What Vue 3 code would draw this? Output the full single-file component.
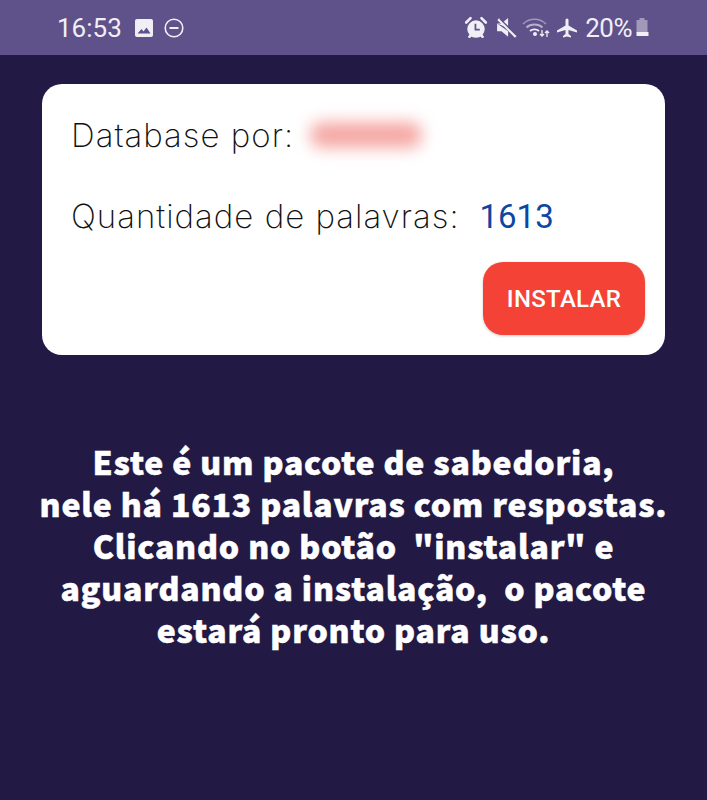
<template>
  <div class="screen">
    <!-- status bar -->
    <header class="status">
      <div class="status__left">
        <span class="status__time">16:53</span>
        <svg class="status__icon" width="18" height="18" viewBox="0 0 18 18">
          <path fill="#f1eff6" fill-rule="evenodd" d="M2 0h14a2 2 0 0 1 2 2v14a2 2 0 0 1-2 2H2a2 2 0 0 1-2-2V2a2 2 0 0 1 2-2zM2.500 14.500h13L11.500 8.500l-3 4-2-2.500z"/>
        </svg>
        <svg width="20" height="20" viewBox="0 0 20 20" fill="none">
          <circle cx="10" cy="10" r="8.800" stroke="#f1eff6" stroke-width="1.600"/>
          <path d="M5.500 10h9" stroke="#f1eff6" stroke-width="2"/>
        </svg>
      </div>
      <div class="status__right">
        <svg width="24" height="24" viewBox="0 0 22 22">
          <path fill="none" stroke="#f1eff6" stroke-width="2.400" stroke-linecap="round" d="M2 6l4-4M20 6l-4-4M5 19l2-2M17 19l-2-2"/>
          <circle cx="11" cy="12" r="8" fill="#f1eff6"/>
          <path fill="none" stroke="#5f5189" stroke-width="1.600" d="M10.500 7v5.500h4"/>
        </svg>
        <svg class="status__mute" width="22" height="22" viewBox="0 0 20 20">
          <path fill="#f1eff6" d="M1 6h4l6-5v9zM1 6v7h4l6 5v-5z"/>
          <path fill="none" stroke="#f1eff6" stroke-width="2.200" d="M2 2l16 16"/>
          <path fill="none" stroke="#5f5189" stroke-width="1.200" d="M3.500 1.500l15 15"/>
        </svg>
        <svg class="status__wifi" width="28" height="24" viewBox="0 0 28 22" fill="none">
          <path stroke="#f1eff6" stroke-opacity=".45" stroke-width="1.500" d="M1 7c6-6.500 17-6.500 23 0"/>
          <path stroke="#f1eff6" stroke-opacity=".6" stroke-width="1.800" d="M4.500 10.500c4-4 12-4 16 0"/>
          <path stroke="#f1eff6" stroke-width="1.800" d="M8 14c2.500-2.200 6.500-2.200 9 0"/>
          <circle cx="13" cy="17" r="2" fill="#f1eff6"/>
          <path stroke="#f1eff6" stroke-width="1.300" d="M20 13v6M18 17l2 2 2-2M25 20v-6M23 16l2-2 2 2"/>
        </svg>
        <svg class="status__plane" width="22" height="22" viewBox="0 0 22 22">
          <path fill="#f1eff6" d="M9.500 8.500V3a1.500 1.500 0 0 1 3 0v5.500l8.500 5v2l-8.500-2.500V17l2.500 2v1.500L11 19.500 7 20.500V19l2.500-2v-4L1 15.500v-2z"/>
        </svg>
        <span class="status__pct">20%</span>
        <svg class="status__batt" width="15" height="22" viewBox="0 0 14 22">
          <path fill="#f1eff6" fill-opacity=".45" d="M4 3V1h5v2h3v13H1V3z"/>
          <path fill="#f1eff6" d="M1 15h12v4H1z"/>
        </svg>
      </div>
    </header>

    <main class="content">
      <section class="card">
        <div class="card__row card__row--author">
          <span class="card__label">Database por:</span>
          <span class="card__blur"></span>
        </div>
        <div class="card__row card__row--count">
          <span class="card__label">Quantidade de palavras:</span>
          <span class="card__num">1613</span>
        </div>
        <div class="card__action">
          <button class="card__btn">INSTALAR</button>
        </div>
      </section>

      <p class="desc">
        Este é um pacote de sabedoria,<br>
        nele há 1613 palavras com respostas.<br>
        Clicando no botão&nbsp; "instalar" e<br>
        aguardando a instalação,&nbsp; o pacote<br>
        estará pronto para uso.
      </p>
    </main>
  </div>
</template>

<script setup>
</script>

<style>
html, body {
  margin: 0;
  background: #221a45;
}
</style>

<style scoped>
.screen {
  width: 707px;
  height: 800px;
  overflow: hidden;
  background: #221a45;
  display: flex;
  flex-direction: column;
}

/* status bar */
.status {
  height: 55px;
  flex: none;
  background: #5f5189;
  display: flex;
  align-items: center;
  justify-content: space-between;
  padding: 0 57px 0 57px;
  color: #f1eff6;
  font-family: Roboto, sans-serif;
}

.status__left {
  display: flex;
  align-items: center;
}

.status__time {
  font-size: 26px;
  margin-right: 13px;
}

.status__icon {
  margin-right: 11px;
}

.status__right {
  display: flex;
  align-items: center;
  gap: 7px;
}

.status__mute {
  margin-left: 1px;
}

.status__wifi {
  margin-left: -3px;
}

.status__plane {
  margin-left: -1px;
}

.status__pct {
  font-size: 26px;
  letter-spacing: -0.5px;
}

.status__batt {
  margin-left: -4px;
}

/* card */
.content {
  padding: 29px 42px 0;
}

.card {
  background: #fff;
  border-radius: 20px;
  height: 271px;
  box-sizing: border-box;
  padding: 0 20px 0 29px;
  display: flex;
  flex-direction: column;
}

.card__row {
  display: flex;
  align-items: center;
}

.card__row--author {
  margin-top: 28px;
  height: 46px;
}

.card__row--count {
  margin-top: 35px;
  height: 46px;
}

.card__label {
  font-family: Inter, sans-serif;
  font-size: 33px;
  font-weight: 200;
  color: #111;
  letter-spacing: 1px;
}

.card__blur {
  width: 112px;
  height: 26px;
  margin-left: 16px;
  border-radius: 12px;
  background: #f5a8a4;
  filter: blur(8px);
}

.card__num {
  font-family: Roboto, sans-serif;
  font-size: 33px;
  color: #0d47a1;
  margin-left: 20px;
}

.card__action {
  display: flex;
  justify-content: flex-end;
  margin-top: 23px;
}

.card__btn {
  width: 162px;
  height: 73px;
  border: none;
  border-radius: 20px;
  background: #f44336;
  color: #fff;
  font-family: Roboto, sans-serif;
  font-size: 24px;
  font-weight: 500;
  letter-spacing: 0.3px;
  box-shadow: 0 1px 3px rgba(0, 0, 0, 0.2);
}

/* description */
.desc {
  margin: 85px -30px 0;
  text-align: center;
  color: #fff;
  font-family: "Noto Sans CJK SC", sans-serif;
  font-size: 32px;
  font-weight: 900;
  line-height: 42px;
  letter-spacing: 0.8px;
  -webkit-text-stroke: 0.5px #fff;
}
</style>
